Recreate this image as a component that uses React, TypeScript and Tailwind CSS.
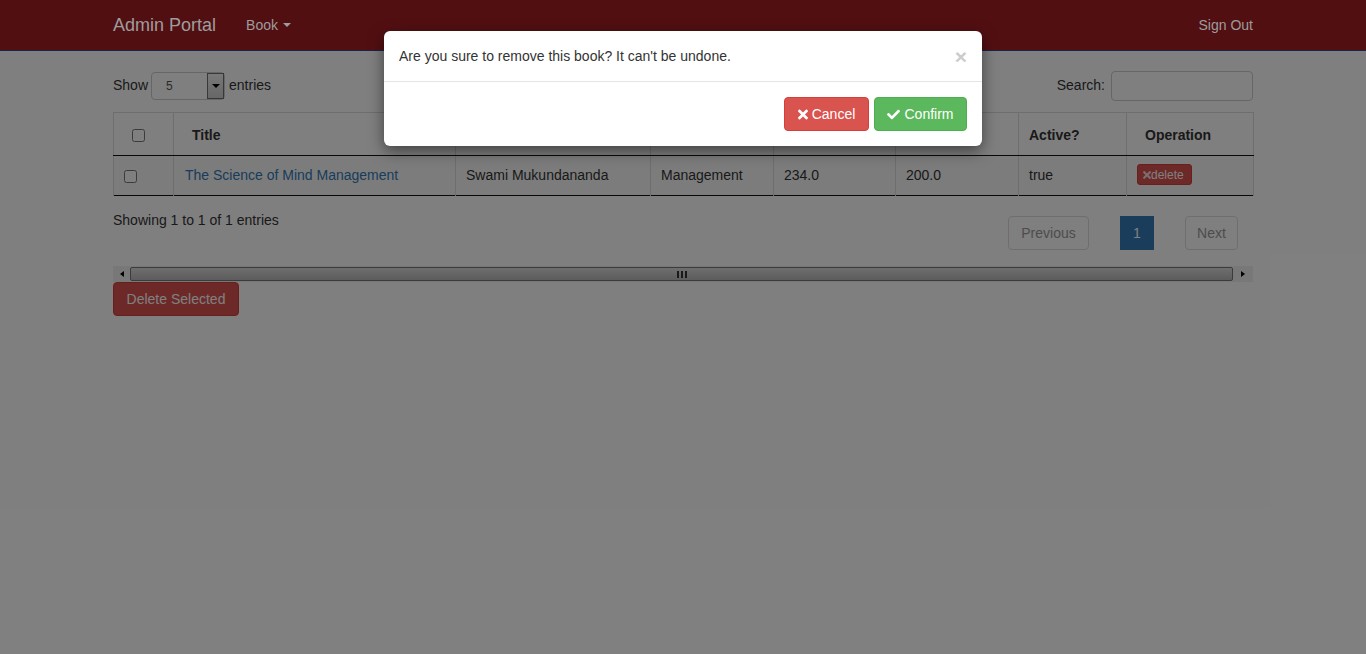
import { FaTimes, FaCheck } from 'react-icons/fa';

const COLS = [
  { label: '', w: 'w-[60px]' },
  { label: 'Title', w: 'w-[282px]' },
  { label: 'Author', w: 'w-[195px]' },
  { label: 'Category', w: 'w-[123px]' },
  { label: 'List Price', w: 'w-[122px]' },
  { label: 'Our Price', w: 'w-[123px]' },
  { label: 'Active?', w: 'w-[108px]' },
  { label: 'Operation', w: 'w-[127px]' },
];

function Navbar() {
  return (
    <nav className="relative z-20 h-[51px] bg-[#520f12] border-b border-[#1b2348]">
      <div className="w-[1140px] mx-auto h-[50px] flex items-center text-[#9d9d9d]">
        <span className="text-[18px] leading-[20px]">Admin Portal</span>
        <span className="ml-[30px] text-[14px] flex items-center gap-[5px]">
          Book
          <span className="inline-block w-0 h-0 border-l-[4px] border-r-[4px] border-t-[4px] border-l-transparent border-r-transparent border-t-[#9d9d9d]" />
        </span>
        <span className="ml-auto text-[14px]">Sign Out</span>
      </div>
    </nav>
  );
}

function Controls() {
  return (
    <div className="flex items-center justify-between h-[29px]">
      <div className="flex items-center gap-[4px]">
        <span>Show</span>
        <div className="flex h-[28px] w-[74px] -ml-px border border-[#ccc] rounded-[4px] bg-white">
          <span className="flex-1 pl-[14px] text-[12px] leading-[26px] text-[#555]">5</span>
          <div className="w-[17px] border border-[#707070] bg-gradient-to-b from-[#f2f2f2] to-[#cfcfcf] flex items-center justify-center">
            <span className="inline-block w-0 h-0 border-l-[4px] border-r-[4px] border-t-[4px] border-l-transparent border-r-transparent border-t-black" />
          </div>
        </div>
        <span>entries</span>
      </div>
      <div className="flex items-center gap-[6px]">
        <span>Search:</span>
        <div className="w-[142px] h-[30px] border border-[#ccc] rounded-[4px] bg-white" />
      </div>
    </div>
  );
}

function BookTable() {
  return (
    <table className="mt-[12px] w-[1140px] table-fixed border-collapse">
      <thead>
        <tr className="h-[43px]">
          {COLS.map((c, i) => (
            <th
              key={i}
              className={`${c.w} border-t border-l border-r border-[#ddd] border-b border-b-[#111] text-left font-bold align-middle pt-[2px] ${
                i === 6 ? 'pl-[10px]' : 'pl-[18px]'
              }`}
            >
              {i === 0 ? <input type="checkbox" className="w-[13px] h-[13px] align-middle" /> : c.label}
            </th>
          ))}
        </tr>
      </thead>
      <tbody>
        <tr className="h-[40px] bg-[#f9f9f9] border-b border-[#111]">
          <td className="border-l border-[#ddd] pl-[10px]">
            <input type="checkbox" className="w-[13px] h-[13px] align-middle" />
          </td>
          <td className="border-l border-[#ddd] pl-[11px] text-[#337ab7]">The Science of Mind Management</td>
          <td className="border-l border-[#ddd] pl-[10px]">Swami Mukundananda</td>
          <td className="border-l border-[#ddd] pl-[10px]">Management</td>
          <td className="border-l border-[#ddd] pl-[10px]">234.0</td>
          <td className="border-l border-[#ddd] pl-[10px]">200.0</td>
          <td className="border-l border-[#ddd] pl-[10px]">true</td>
          <td className="border-l border-r border-[#ddd] pl-[10px]">
            <span className="inline-flex items-center h-[21px] w-[55px] px-[5px] rounded-[3px] bg-[#d9534f] border border-[#d43f3a] text-white text-[12px]">
              <FaTimes className="w-[8px] h-[12px] opacity-80" />
              delete
            </span>
          </td>
        </tr>
      </tbody>
    </table>
  );
}

function Footer() {
  return (
    <div className="flex justify-between items-start mt-[14px]">
      <div className="leading-[20px]">Showing 1 to 1 of 1 entries</div>
      <div className="flex items-center gap-[31px] mt-[6px] mr-[15px]">
        <span className="h-[34px] w-[81px] flex items-center justify-center border border-[#ddd] rounded-[4px] text-[#999]">Previous</span>
        <span className="h-[34px] w-[34px] flex items-center justify-center bg-[#337ab7] text-white">1</span>
        <span className="h-[34px] w-[53px] flex items-center justify-center border border-[#ddd] rounded-[4px] text-[#999]">Next</span>
      </div>
    </div>
  );
}

function Scrollbar() {
  return (
    <div className="mt-[16px] h-[16px] flex bg-[#f0f0f0]">
      <div className="w-[17px] flex items-center justify-center">
        <span className="inline-block w-0 h-0 border-t-[3px] border-b-[3px] border-r-[4px] border-t-transparent border-b-transparent border-r-black" />
      </div>
      <div className="flex-1 my-px rounded-[2px] border border-[#777] bg-gradient-to-b from-[#dedede] to-[#b8b8b8] flex items-center justify-center gap-[2px]">
        <span className="w-[2px] h-[7px] bg-[#333]" />
        <span className="w-[2px] h-[7px] bg-[#333]" />
        <span className="w-[2px] h-[7px] bg-[#333]" />
      </div>
      <div className="w-[20px] flex items-center justify-center">
        <span className="inline-block w-0 h-0 border-t-[3px] border-b-[3px] border-l-[4px] border-t-transparent border-b-transparent border-l-black" />
      </div>
    </div>
  );
}

function ConfirmModal() {
  return (
    <div className="absolute inset-0 z-30 flex justify-center">
      <div className="mt-[31px] w-[598px] h-fit bg-white rounded-[6px] shadow-[0_5px_15px_rgba(0,0,0,0.5)]">
        <div className="h-[51px] px-[15px] flex items-center border-b border-[#e5e5e5]">
          <span className="flex-1">Are you sure to remove this book? It can't be undone.</span>
          <span className="text-[21px] font-bold leading-none text-[#ccc] mt-[1px]">×</span>
        </div>
        <div className="p-[15px] flex justify-end gap-[5px]">
          <button className="h-[34px] w-[85px] flex items-center justify-center gap-[4px] rounded-[4px] bg-[#d9534f] border border-[#d43f3a] text-white">
            <FaTimes className="w-[10px] h-[15px]" />
            Cancel
          </button>
          <button className="h-[34px] w-[93px] flex items-center justify-center gap-[4px] rounded-[4px] bg-[#5cb85c] border border-[#4cae4c] text-white">
            <FaCheck className="w-[13px] h-[13px]" />
            Confirm
          </button>
        </div>
      </div>
    </div>
  );
}

export default function App() {
  return (
    <div className="relative h-[654px] overflow-hidden bg-white text-[14px] text-[#333] font-['Liberation_Sans',Arial,sans-serif]">
      <Navbar />
      <main className="w-[1140px] mx-auto pt-[20px]">
        <Controls />
        <BookTable />
        <Footer />
        <Scrollbar />
        <button className="h-[34px] w-[126px] rounded-[4px] bg-[#d9534f] border border-[#d43f3a] text-white">
          Delete Selected
        </button>
      </main>
      <div className="absolute inset-0 z-10 bg-black/50" />
      <ConfirmModal />
    </div>
  );
}
